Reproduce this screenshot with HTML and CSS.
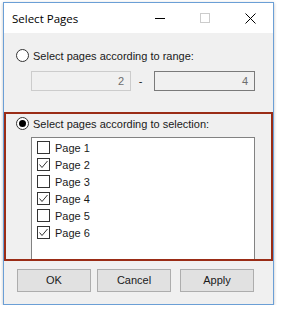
FILE: index.html
```html
<!DOCTYPE html>
<html lang="en">
<head>
    <meta charset="UTF-8">
    <title>Select Pages</title>
    <link rel="stylesheet" href="styles.css">
</head>
<body>
    <div class="window">
        <div class="titlebar">
            <span class="title">Select Pages</span>
            <div class="caption-buttons">
                <svg class="cap-btn" width="10" height="10" viewBox="0 0 10 10"><line x1="0" y1="5.5" x2="10" y2="5.5" stroke="#000" stroke-width="1"/></svg>
                <svg class="cap-btn" width="10" height="10" viewBox="0 0 10 10"><rect x="0.5" y="0.5" width="9" height="9" fill="none" stroke="#cccccc" stroke-width="1"/></svg>
                <svg class="cap-btn" width="11" height="11" viewBox="0 0 11 11"><path d="M0.5 0.5 L10.5 10.5 M10.5 0.5 L0.5 10.5" stroke="#000" stroke-width="1"/></svg>
            </div>
        </div>
        <div class="content">
            <!-- range option -->
            <div class="option">
                <span class="radio"></span>
                <span>Select pages according to range:</span>
            </div>
            <div class="range-row">
                <div class="textbox disabled">2</div>
                <div class="dash">-</div>
                <div class="textbox">4</div>
            </div>

            <!-- selection option -->
            <div class="selection-group">
                <div class="option">
                    <span class="radio checked"></span>
                    <span>Select pages according to selection:</span>
                </div>
                <div class="page-list">
                    <div class="page-item"><span class="checkbox"></span>Page 1</div>
                    <div class="page-item"><span class="checkbox"><svg class="tick" width="11" height="11" viewBox="0 0 11 11"><polyline points="1.5,5.5 4,8.5 9.5,2" fill="none" stroke="#333" stroke-width="1"/></svg></span>Page 2</div>
                    <div class="page-item"><span class="checkbox"></span>Page 3</div>
                    <div class="page-item"><span class="checkbox"><svg class="tick" width="11" height="11" viewBox="0 0 11 11"><polyline points="1.5,5.5 4,8.5 9.5,2" fill="none" stroke="#333" stroke-width="1"/></svg></span>Page 4</div>
                    <div class="page-item"><span class="checkbox"></span>Page 5</div>
                    <div class="page-item"><span class="checkbox"><svg class="tick" width="11" height="11" viewBox="0 0 11 11"><polyline points="1.5,5.5 4,8.5 9.5,2" fill="none" stroke="#333" stroke-width="1"/></svg></span>Page 6</div>
                </div>
            </div>

            <div class="buttons">
                <div class="btn">OK</div>
                <div class="btn cancel">Cancel</div>
                <div class="btn apply">Apply</div>
            </div>
        </div>
    </div>
</body>
</html>
```

FILE: styles.css
```css
body, html, div {
    margin: 0;
    padding: 0;
}

body {
    background: #ffffff;
    font-family: "Liberation Sans", Arial, sans-serif;
    font-size: 11px;
    color: #1a1a1a;
}

.window {
    margin: 2px 0 0 3px;
    width: 271px;
    height: 303px;
    box-sizing: border-box;
    border: 1px solid #6b9fd6;
    box-shadow: 0 1px 3px rgba(0, 0, 0, 0.25);
    display: flex;
    flex-direction: column;
}

.titlebar {
    height: 30px;
    background: #ffffff;
    display: flex;
    align-items: center;
    padding-left: 8px;
}

.title {
    font-family: "Open Sans", "Noto Sans", sans-serif;
    font-size: 11.5px;
    color: #000000;
    margin-top: 1px;
}

.caption-buttons {
    margin-left: auto;
    display: flex;
    align-items: center;
}

.cap-btn {
    display: block;
}

.caption-buttons .cap-btn:nth-child(1) {
    margin-right: 35px;
}

.caption-buttons .cap-btn:nth-child(2) {
    margin-right: 35px;
}

.caption-buttons .cap-btn:nth-child(3) {
    margin-right: 17px;
}

.content {
    flex: 1;
    background: #f0f0f0;
    padding-top: 16px;
}

.option {
    display: flex;
    align-items: center;
    height: 13px;
    padding-left: 12px;
}

.radio {
    width: 13px;
    height: 13px;
    box-sizing: border-box;
    border: 1px solid #333333;
    border-radius: 50%;
    background: #ffffff;
    margin-right: 4px;
    position: relative;
}

.radio.checked::after {
    content: "";
    position: absolute;
    left: 2px;
    top: 2px;
    width: 7px;
    height: 7px;
    border-radius: 50%;
    background: #000000;
}

.range-row {
    display: flex;
    align-items: center;
    margin-top: 9px;
    padding-left: 27px;
}

.textbox {
    width: 101px;
    height: 20px;
    box-sizing: border-box;
    border: 1px solid #7a7a7a;
    background: #f0f0f0;
    color: #6d6d6d;
    text-align: right;
    line-height: 18px;
    padding-right: 6px;
}

.textbox.disabled {
    width: 100px;
    border-color: #cccccc;
}

.dash {
    width: 23px;
    text-align: center;
    padding-right: 4px;
    box-sizing: border-box;
}

.selection-group {
    margin-top: 21px;
    height: 149px;
    box-sizing: border-box;
    border: 2px solid #9a2c16;
    padding-top: 3px;
    display: flex;
    flex-direction: column;
}

.selection-group .option {
    padding-left: 10px;
}

.page-list {
    flex: 1;
    margin: 7px 0 0 25px;
    width: 224px;
    box-sizing: border-box;
    border: 1px solid #828282;
    border-bottom: none;
    background: #ffffff;
    padding: 1px 0 0 5px;
}

.page-item {
    display: flex;
    align-items: center;
    height: 17px;
}

.checkbox {
    width: 13px;
    height: 13px;
    box-sizing: border-box;
    border: 1px solid #333333;
    background: #ffffff;
    margin-right: 5px;
}

.tick {
    display: block;
}

.buttons {
    display: flex;
    margin-top: 8px;
    padding-left: 13px;
}

.btn {
    width: 74px;
    height: 23px;
    box-sizing: border-box;
    border: 1px solid #adadad;
    background: #e1e1e1;
    text-align: center;
    line-height: 21px;
    font-size: 11px;
}

.btn.cancel {
    margin-left: 6px;
}

.btn.apply {
    margin-left: 9px;
}
```
